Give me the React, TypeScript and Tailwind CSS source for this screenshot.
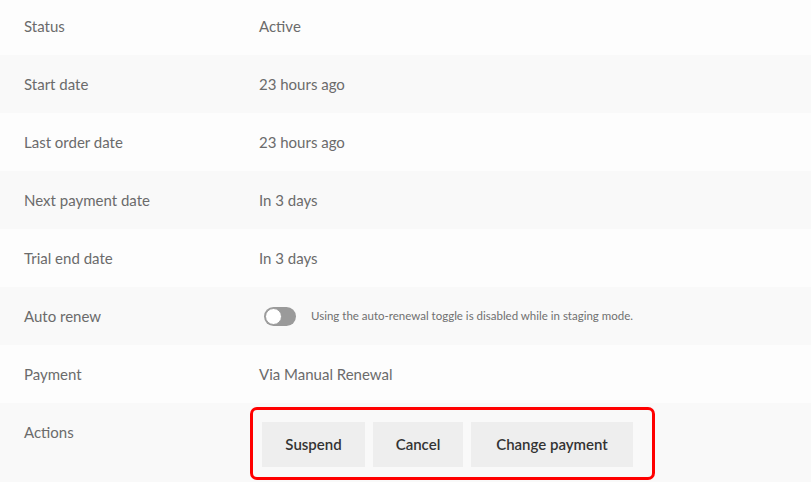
import React from 'react';

const rows: { label: string; value: string }[] = [
  { label: 'Status', value: 'Active' },
  { label: 'Start date', value: '23 hours ago' },
  { label: 'Last order date', value: '23 hours ago' },
  { label: 'Next payment date', value: 'In 3 days' },
  { label: 'Trial end date', value: 'In 3 days' },
];

const actions = [
  { label: 'Suspend', width: 'w-[103px]' },
  { label: 'Cancel', width: 'w-[90px]' },
  { label: 'Change payment', width: 'w-[162px]' },
];

const App: React.FC = () => {
  return (
    <div
      className="w-[811px] h-[482px] overflow-hidden bg-white text-[15px] text-[#6b6b6b]"
      style={{ fontFamily: 'Lato, "Open Sans", sans-serif' }}
    >
      <div className="-mt-[3px]">
        {rows.map((row, i) => (
          <div
            key={row.label}
            className={`flex items-center h-[58px] ${i % 2 === 0 ? 'bg-[#fdfdfd]' : 'bg-[#f9f9f9]'}`}
          >
            <div className="w-[259px] pl-6 shrink-0">{row.label}</div>
            <div>{row.value}</div>
          </div>
        ))}

        {/* Auto renew */}
        <div className="flex items-center h-[58px] bg-[#f9f9f9]">
          <div className="w-[259px] pl-6 shrink-0">Auto renew</div>
          <div className="flex items-center gap-[15px] pl-[5px]">
            <div className="w-[32px] h-[19px] rounded-full bg-[#9a9a9a] relative">
              <div className="absolute left-[1px] top-[1px] w-[17px] h-[17px] rounded-full bg-white border border-[#9a9a9a]" />
            </div>
            <span className="text-[11.5px] text-[#707070]">
              Using the auto-renewal toggle is disabled while in staging mode.
            </span>
          </div>
        </div>

        {/* Payment */}
        <div className="flex items-center h-[58px] bg-[#fdfdfd]">
          <div className="w-[259px] pl-6 shrink-0">Payment</div>
          <div>Via Manual Renewal</div>
        </div>

        {/* Actions */}
        <div className="flex items-start h-[90px] bg-[#f9f9f9]">
          <div className="w-[250px] pl-6 pt-[18px] shrink-0">Actions</div>
          <div className="mt-[4px] border-[3px] border-[#ff0000] rounded-[7px] flex gap-2 pl-[9px] pr-[19px] pt-[12px] pb-[10px]">
            {actions.map((a) => (
              <button
                key={a.label}
                className={`h-[45px] ${a.width} bg-[#eeeeee] text-[#333333] font-semibold`}
              >
                {a.label}
              </button>
            ))}
          </div>
        </div>
      </div>
    </div>
  );
};

export default App;
